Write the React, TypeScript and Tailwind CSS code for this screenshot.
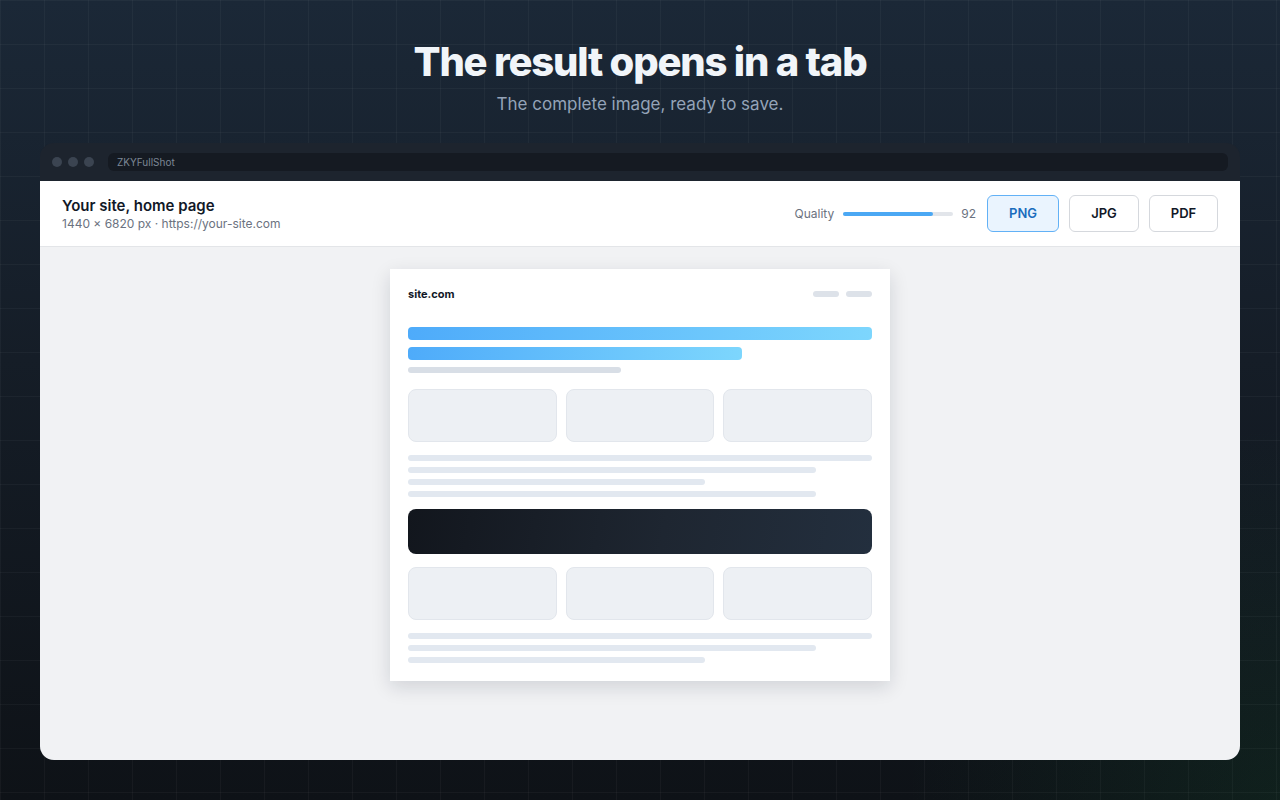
import React from 'react';

const Bar = ({ w, className = '' }: { w: string; className?: string }) => (
  <div className={'h-[6px] rounded-full bg-[#e2e8f0] ' + w + ' ' + className} />
);

const CardRow = () => (
  <div className="grid grid-cols-3 gap-[9px]">
    {[0, 1, 2].map(i => (
      <div key={i} className="h-[53px] rounded-[8px] border border-[#e2e6ec] bg-[#edf0f4]" />
    ))}
  </div>
);

const FormatButton = ({ label, active, w }: { label: string; active?: boolean; w: string }) => (
  <button
    className={
      (active
        ? 'border-[#62b1f6] bg-[#eaf4fe] text-[#1a6cbd] '
        : 'border-[#d5d8dd] bg-white text-[#111827] ') +
      'h-[37px] rounded-[6px] border text-[13px] font-semibold ' +
      w
    }
  >
    {label}
  </button>
);

export default function App() {
  return (
    <div
      className="min-h-[800px] h-[800px] w-full overflow-hidden font-['Inter','Noto_Sans',sans-serif] bg-[linear-gradient(rgba(255,255,255,0.035)_1px,transparent_1px),linear-gradient(90deg,rgba(255,255,255,0.035)_1px,transparent_1px),radial-gradient(circle_at_100%_100%,rgba(34,197,94,0.08),transparent_25%),linear-gradient(180deg,#1b2837_0%,#151d27_45%,#0e1217_100%)] bg-[size:44px_44px,44px_44px,100%_100%,100%_100%]"
    >
      <header className="flex flex-col items-center pt-[38px]">
        <h1 className="text-[40px] leading-[48px] font-extrabold tracking-[-0.03em] text-[#f1f5f9]">
          The result opens in a tab
        </h1>
        <p className="mt-[4px] text-[17px] leading-[28px] text-[#94a3b8]">The complete image, ready to save.</p>
      </header>

      {/* browser window */}
      <div className="mx-auto mt-[25px] flex h-[617px] w-[1200px] flex-col overflow-hidden rounded-[14px] bg-[#1d242e]">
        <div className="flex h-[38px] shrink-0 items-center gap-[6px] pl-[12px] pr-[12px]">
          <span className="h-[10px] w-[10px] rounded-full bg-[#3b4451]" />
          <span className="h-[10px] w-[10px] rounded-full bg-[#3b4451]" />
          <span className="h-[10px] w-[10px] rounded-full bg-[#3b4451]" />
          <div className="ml-[8px] flex h-[18px] flex-1 items-center rounded-[6px] bg-[#151a22] px-[9px] text-[10px] text-[#7c8795]">
            ZKYFullShot
          </div>
        </div>

        <div className="flex h-[66px] shrink-0 items-center justify-between border-b border-[#e3e5e8] bg-white px-[22px]">
          <div>
            <p className="text-[15px] leading-[19px] font-semibold text-[#111827]">Your site, home page</p>
            <p className="mt-[1px] text-[12px] leading-[16px] text-[#6b7280]">1440 × 6820 px · https://your-site.com</p>
          </div>
          <div className="flex items-center">
            <span className="text-[12px] text-[#6b7280]">Quality</span>
            <div className="ml-[9px] h-[4px] w-[110px] rounded-full bg-[#e2e5ea]">
              <div className="h-full rounded-full bg-[#4ba8f4]" style={{ width: '82%' }} />
            </div>
            <span className="ml-[8px] text-[12px] text-[#6b7280]">92</span>
            <div className="ml-[11px] flex gap-[10px]">
              <FormatButton label="PNG" active w="w-[72px]" />
              <FormatButton label="JPG" w="w-[70px]" />
              <FormatButton label="PDF" w="w-[69px]" />
            </div>
          </div>
        </div>

        <div className="flex flex-1 justify-center bg-[#f1f2f4] pt-[22px]">
          {/* captured page preview */}
          <div className="h-[412px] w-[500px] bg-white p-[18px] shadow-[0_6px_18px_rgba(15,23,42,0.14)]">
            <div className="flex h-[14px] items-center justify-between">
              <span className="text-[11px] font-bold text-[#111827]">site.com</span>
              <div className="flex gap-[7px]">
                <span className="h-[6px] w-[26px] rounded-full bg-[#dde2e9]" />
                <span className="h-[6px] w-[26px] rounded-full bg-[#dde2e9]" />
              </div>
            </div>

            <div className="mt-[26px] h-[13px] w-full rounded-[4px] bg-[linear-gradient(90deg,#4eabfa,#7dd6fd)]" />
            <div className="mt-[7px] h-[13px] w-[72%] rounded-[4px] bg-[linear-gradient(90deg,#4eabfa,#7dd6fd)]" />
            <div className="mt-[7px] h-[6px] w-[46%] rounded-full bg-[#d8dee6]" />

            <div className="mt-[16px]">
              <CardRow />
            </div>

            <div className="mt-[13px] flex flex-col gap-[6px]">
              <Bar w="w-full" />
              <Bar w="w-[88%]" />
              <Bar w="w-[64%]" />
              <Bar w="w-[88%]" />
            </div>

            <div className="mt-[12px] h-[45px] rounded-[8px] bg-[linear-gradient(100deg,#12161d,#1e2631_55%,#232f3e)]" />

            <div className="mt-[13px]">
              <CardRow />
            </div>

            <div className="mt-[13px] flex flex-col gap-[6px]">
              <Bar w="w-full" />
              <Bar w="w-[88%]" />
              <Bar w="w-[64%]" />
            </div>
          </div>
        </div>
      </div>
    </div>
  );
}
